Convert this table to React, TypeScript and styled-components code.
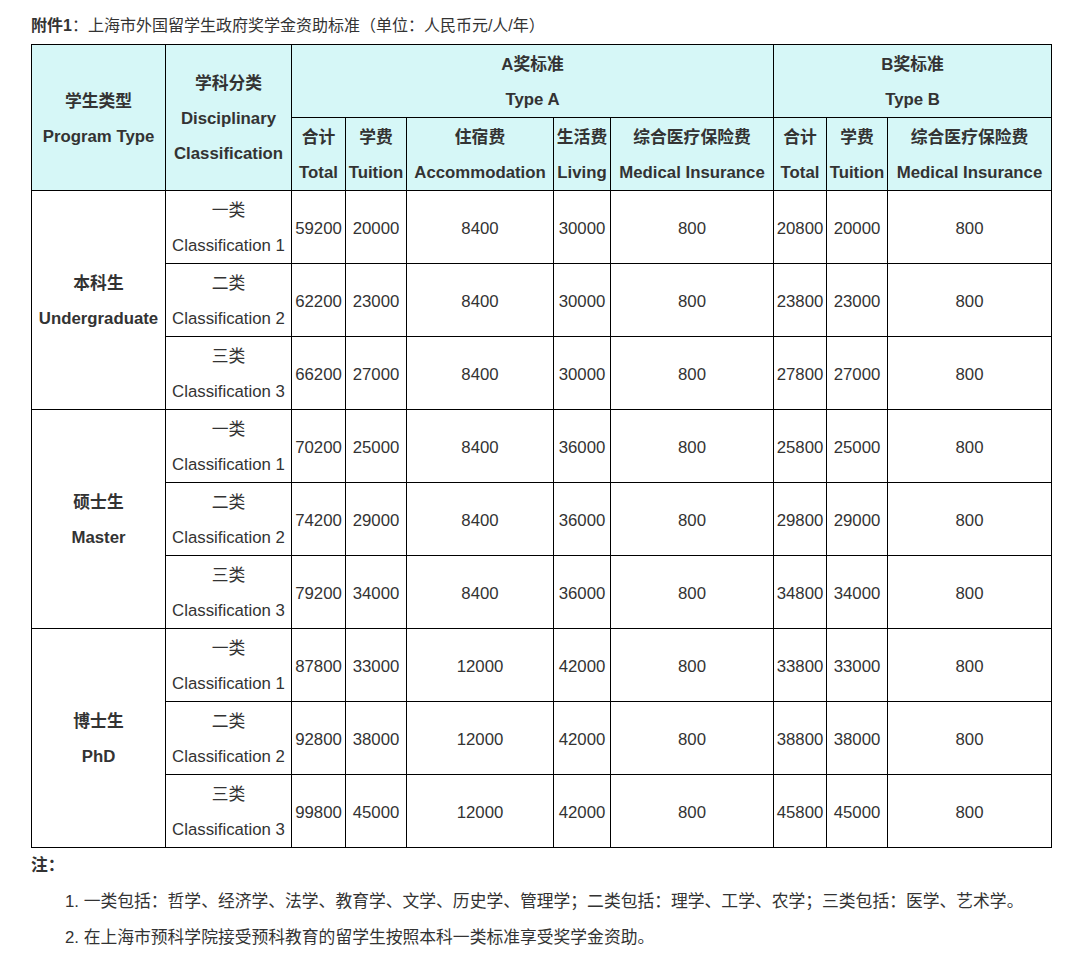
import styled, { createGlobalStyle } from 'styled-components'

/* ── Global ── */
const GlobalStyle = createGlobalStyle`
  body {
    margin: 0;
    background: #fff;
    color: #333;
    font-family: "Liberation Sans", Arial, "Noto Sans CJK SC", sans-serif;
    font-size: 16px;
  }
`

/* ── Styled ── */
const Page = styled.div`
  padding: 8px 0 0 31px;
`

const Caption = styled.p`
  margin: 0;
  line-height: 36px;
`

const Table = styled.table`
  border-collapse: collapse;
  table-layout: fixed;
  width: 1021px;
  font-size: 16.8px;
`

const HeadCell = styled.th`
  background: #d6f7f7;
  border: 1px solid #000;
  padding: 2px 0 0;
  text-align: center;
  vertical-align: middle;
  font-weight: bold;
  line-height: 35px;
  white-space: nowrap;
`

const Cell = styled.td<{ $bold?: boolean }>`
  border: 1px solid #000;
  padding: 2px 0 0;
  text-align: center;
  vertical-align: middle;
  line-height: 35px;
  font-weight: ${({ $bold }) => ($bold ? 'bold' : 'normal')};
  white-space: nowrap;
`

const Line = styled.div``

const Notes = styled.div`
  line-height: 36px;
  font-size: 16.8px;
`

const NoteTitle = styled.p`
  margin: 0;
  font-weight: bold;
`

const NoteItem = styled.p`
  margin: 0;
  padding-left: 34px;
`

/* ── Data ── */
const colWidths = [134, 126, 54, 61, 147, 57, 163, 53, 61, 164]

const groups = [
  {
    zh: '本科生',
    en: 'Undergraduate',
    rows: [
      ['59200', '20000', '8400', '30000', '800', '20800', '20000', '800'],
      ['62200', '23000', '8400', '30000', '800', '23800', '23000', '800'],
      ['66200', '27000', '8400', '30000', '800', '27800', '27000', '800'],
    ],
  },
  {
    zh: '硕士生',
    en: 'Master',
    rows: [
      ['70200', '25000', '8400', '36000', '800', '25800', '25000', '800'],
      ['74200', '29000', '8400', '36000', '800', '29800', '29000', '800'],
      ['79200', '34000', '8400', '36000', '800', '34800', '34000', '800'],
    ],
  },
  {
    zh: '博士生',
    en: 'PhD',
    rows: [
      ['87800', '33000', '12000', '42000', '800', '33800', '33000', '800'],
      ['92800', '38000', '12000', '42000', '800', '38800', '38000', '800'],
      ['99800', '45000', '12000', '42000', '800', '45800', '45000', '800'],
    ],
  },
]

const classes = [
  ['一类', 'Classification 1'],
  ['二类', 'Classification 2'],
  ['三类', 'Classification 3'],
]

const subHeadA = [
  ['合计', 'Total'],
  ['学费', 'Tuition'],
  ['住宿费', 'Accommodation'],
  ['生活费', 'Living'],
  ['综合医疗保险费', 'Medical Insurance'],
]

const subHeadB = [
  ['合计', 'Total'],
  ['学费', 'Tuition'],
  ['综合医疗保险费', 'Medical Insurance'],
]

/* ── Component ── */
export default function App() {
  return (
    <Page>
      <GlobalStyle />
      <Caption>
        <b>附件1</b>：上海市外国留学生政府奖学金资助标准（单位：人民币元/人/年）
      </Caption>

      <Table>
        <colgroup>
          {colWidths.map((w, i) => (
            <col key={i} style={{ width: w }} />
          ))}
        </colgroup>
        <thead>
          <tr>
            <HeadCell rowSpan={2}>
              <Line>学生类型</Line>
              <Line>Program Type</Line>
            </HeadCell>
            <HeadCell rowSpan={2}>
              <Line>学科分类</Line>
              <Line>Disciplinary</Line>
              <Line>Classification</Line>
            </HeadCell>
            <HeadCell colSpan={5}>
              <Line>A奖标准</Line>
              <Line>Type A</Line>
            </HeadCell>
            <HeadCell colSpan={3}>
              <Line>B奖标准</Line>
              <Line>Type B</Line>
            </HeadCell>
          </tr>
          <tr>
            {[...subHeadA, ...subHeadB].map(([zh, en], i) => (
              <HeadCell key={i}>
                <Line>{zh}</Line>
                <Line>{en}</Line>
              </HeadCell>
            ))}
          </tr>
        </thead>
        <tbody>
          {groups.map((g) =>
            g.rows.map((row, ri) => (
              <tr key={g.en + ri}>
                {ri === 0 && (
                  <Cell rowSpan={3} $bold>
                    <Line>{g.zh}</Line>
                    <Line>{g.en}</Line>
                  </Cell>
                )}
                <Cell>
                  <Line>{classes[ri][0]}</Line>
                  <Line>{classes[ri][1]}</Line>
                </Cell>
                {row.map((v, ci) => (
                  <Cell key={ci}>{v}</Cell>
                ))}
              </tr>
            ))
          )}
        </tbody>
      </Table>

      <Notes>
        <NoteTitle>注：</NoteTitle>
        <NoteItem>
          1. 一类包括：哲学、经济学、法学、教育学、文学、历史学、管理学；二类包括：理学、工学、农学；三类包括：医学、艺术学。
        </NoteItem>
        <NoteItem>2. 在上海市预科学院接受预科教育的留学生按照本科一类标准享受奖学金资助。</NoteItem>
      </Notes>
    </Page>
  )
}
